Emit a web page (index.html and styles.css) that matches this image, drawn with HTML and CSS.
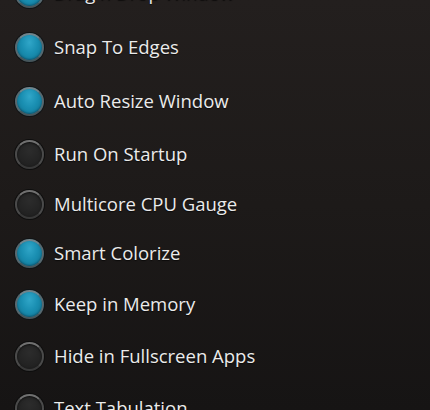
FILE: index.html
```html
<!DOCTYPE html>
<html>
<head>
    <title>Settings</title>
    <link rel="stylesheet" href="styles.css">
</head>
<body>
<div class="screen">
    <ul class="options">
        <li class="option"><span class="dot on"></span><span class="label">Drag n Drop Window</span></li>
        <li class="option"><span class="dot on"></span><span class="label">Snap To Edges</span></li>
        <li class="option"><span class="dot on"></span><span class="label">Auto Resize Window</span></li>
        <li class="option"><span class="dot"></span><span class="label">Run On Startup</span></li>
        <li class="option"><span class="dot"></span><span class="label">Multicore CPU Gauge</span></li>
        <li class="option"><span class="dot on"></span><span class="label">Smart Colorize</span></li>
        <li class="option"><span class="dot on"></span><span class="label">Keep in Memory</span></li>
        <li class="option"><span class="dot"></span><span class="label">Hide in Fullscreen Apps</span></li>
        <li class="option"><span class="dot"></span><span class="label">Text Tabulation</span></li>
    </ul>
</div>
</body>
</html>
```

FILE: styles.css
```css
html, body {
    margin: 0;
    padding: 0;
    height: 100%;
}

body {
    background: linear-gradient(to bottom, #231f1e 0%, #1d1a19 50%, #161414 100%);
    font-family: "Open Sans", Roboto, sans-serif;
    overflow: hidden;
}

.screen {
    height: 410px;
    overflow: hidden;
}

.options {
    list-style: none;
    margin: -34px 0 0 0;
    padding: 0;
    display: grid;
    grid-template-rows: 54px 54px 54px 52px 49px 49px 52px 52px 52px;
}

.option {
    display: flex;
    align-items: center;
    padding-left: 15px;
}

.dot {
    flex: none;
    width: 25px;
    height: 25px;
    border-radius: 50%;
    border: 2px solid #4a4a4a;
    border-top-color: #707070;
    border-bottom-color: #383838;
    background: radial-gradient(circle at 50% 35%, #2c2c2c 0%, #232323 60%, #1a1a1a 100%);
    box-shadow: 0 0 0 1px #0e0e0e, inset 0 1px 2px rgba(0, 0, 0, 0.6);
    margin-right: 10px;
}

.dot.on {
    border-color: #56686f;
    border-top-color: #6f848c;
    border-bottom-color: #45565c;
    background: radial-gradient(ellipse at 50% 30%, #30a6c8 0%, #1a8fb2 45%, #0f7391 100%);
    box-shadow: 0 0 0 1px #101416, inset 0 -1px 2px rgba(0, 40, 60, 0.5);
}

.label {
    color: #ebebeb;
    font-size: 18.5px;
    line-height: 1;
    text-shadow: 0 1px 1px rgba(0, 0, 0, 0.6);
    white-space: nowrap;
}
```
